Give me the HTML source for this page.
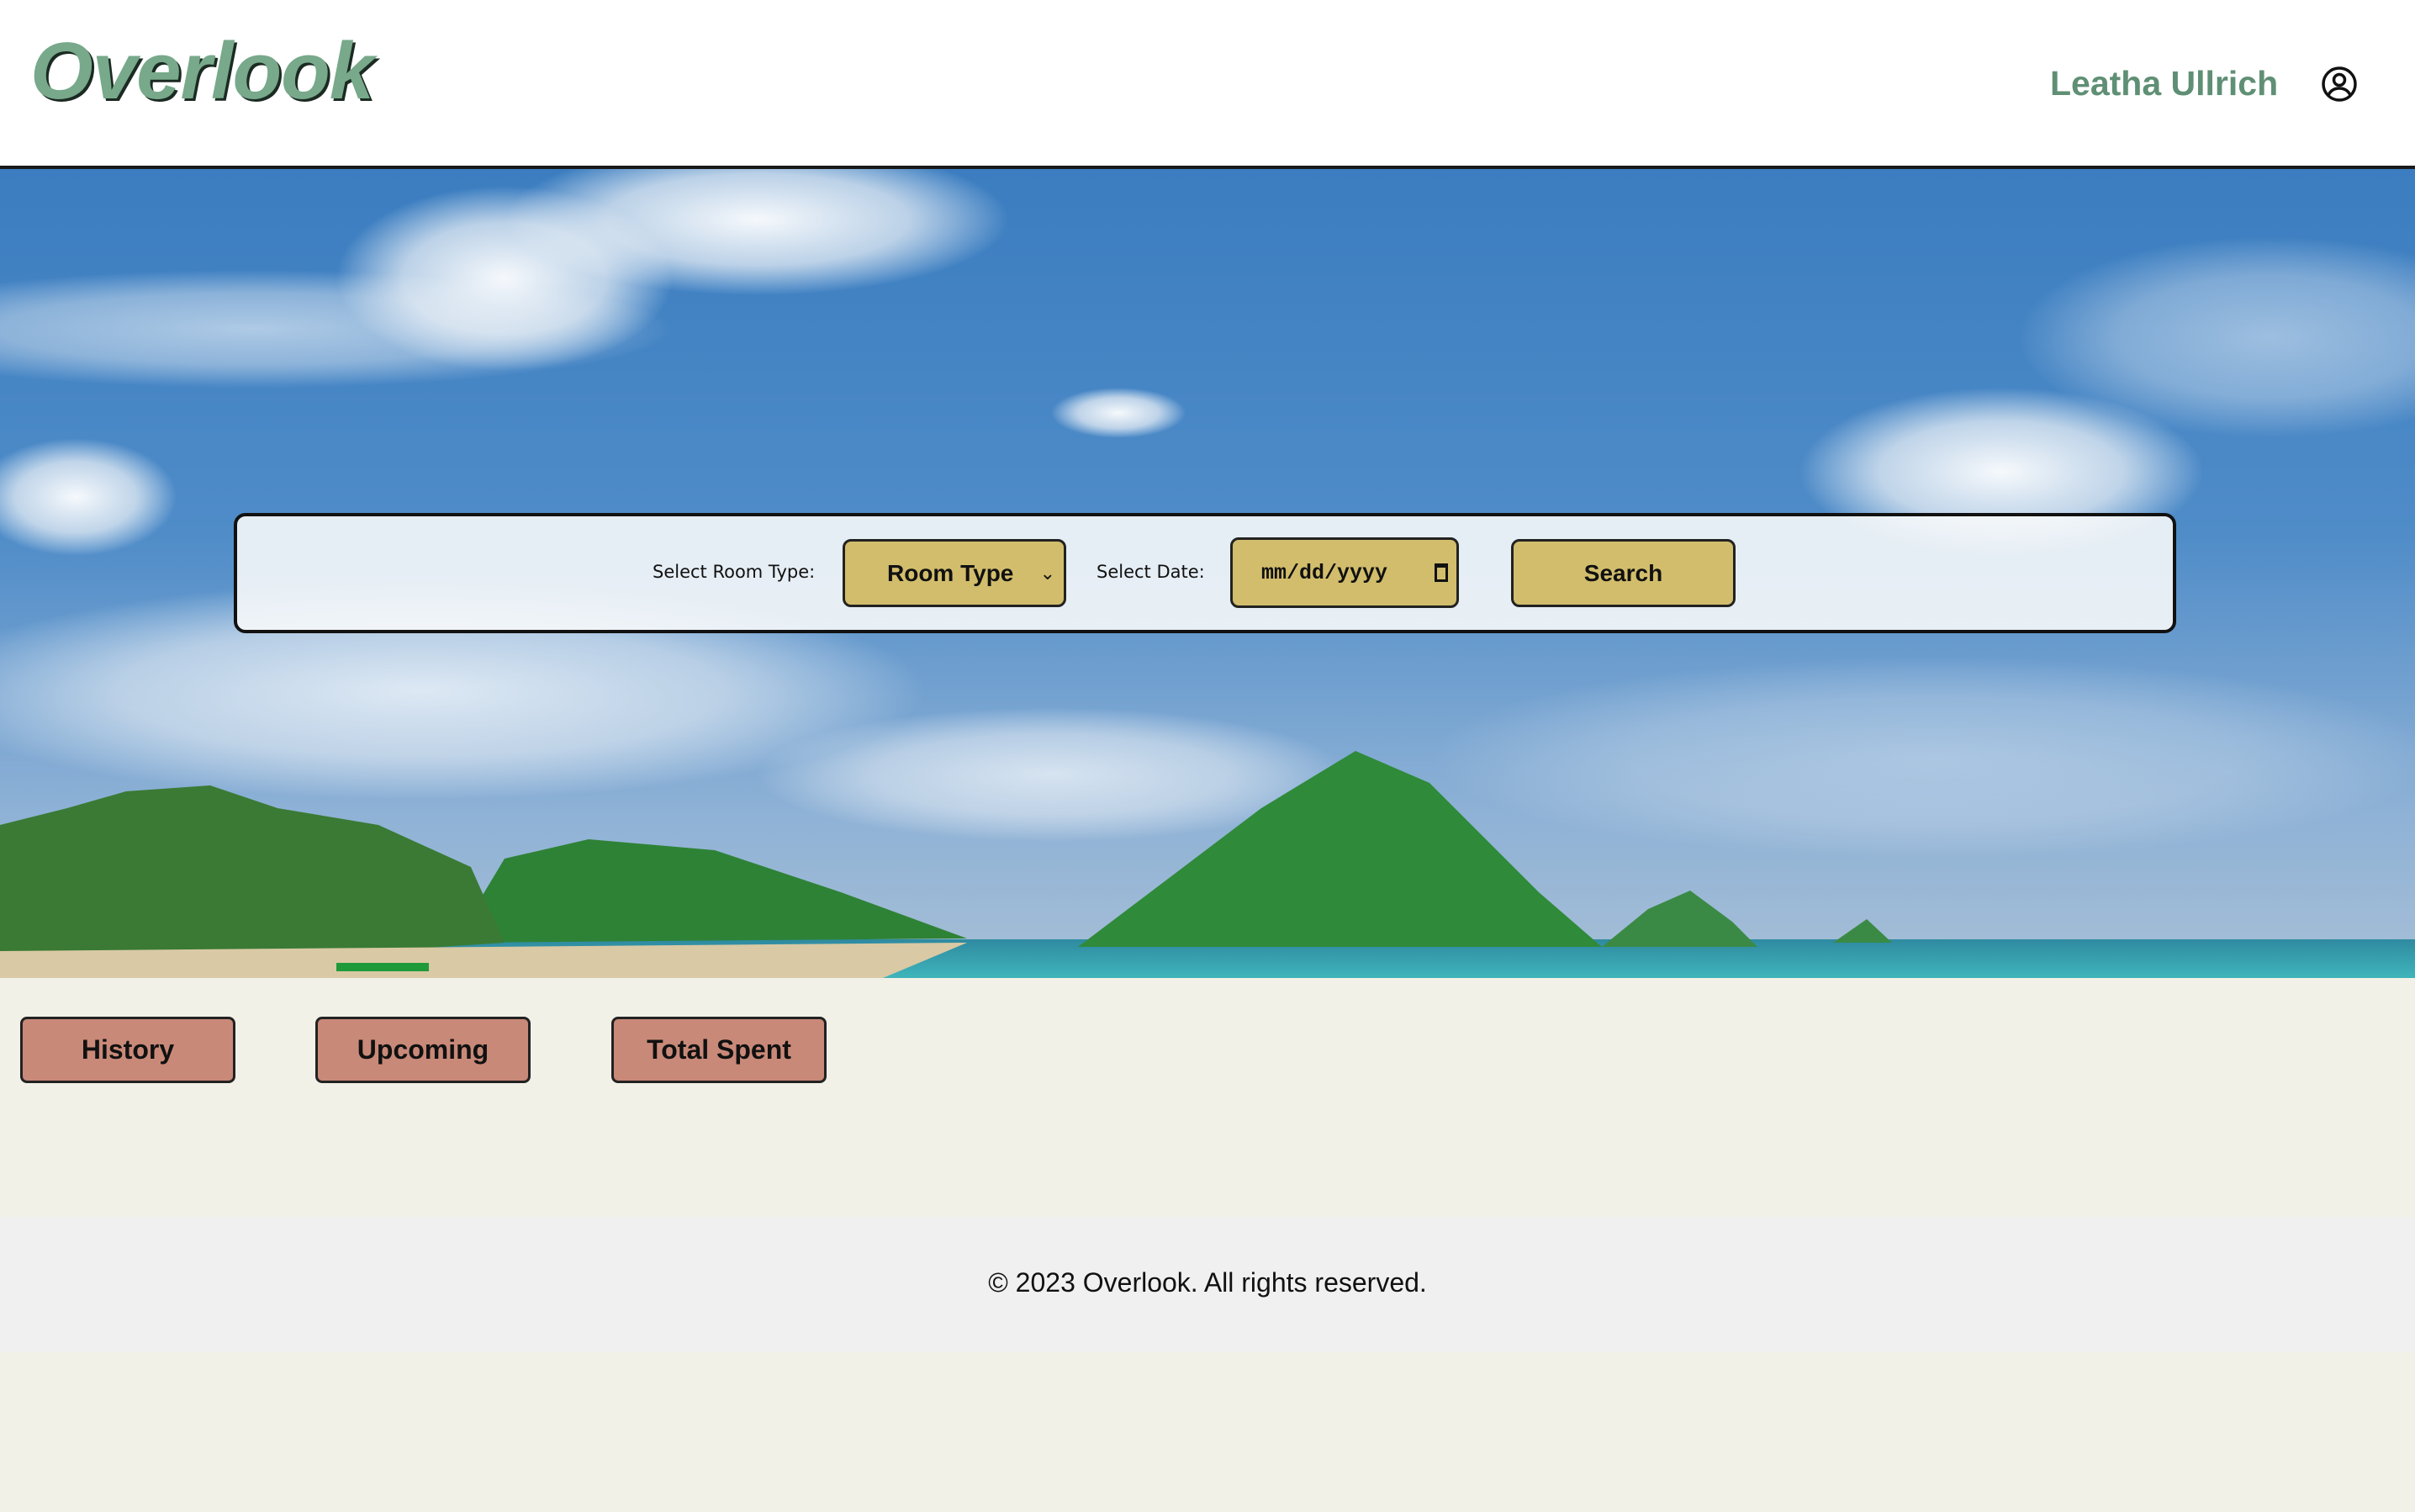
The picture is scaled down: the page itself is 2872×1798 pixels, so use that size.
<!DOCTYPE html>
<html><head><meta charset="utf-8"><style>
*{margin:0;padding:0;box-sizing:border-box}
body{width:2872px;height:1798px;background:#f2f1e8;font-family:"Liberation Sans",sans-serif;position:relative;overflow:hidden}
header{position:absolute;left:0;top:0;width:2872px;height:201px;background:#fff;border-bottom:4px solid #1a1a1a}
.logo{position:absolute;left:36px;top:30px;font-family:"Liberation Sans",sans-serif;font-weight:bold;font-style:italic;font-size:96px;color:#77a98a;letter-spacing:-1px;text-shadow:3px 3px 0 #1b2a22}
.name{position:absolute;left:2438px;top:76px;font-family:"Liberation Sans",sans-serif;font-weight:bold;font-size:41px;color:#5f8f74}
.hero{position:absolute;left:0;top:201px;width:2872px;height:962px;border-bottom:4px solid #1a1a1a}
.panel{position:absolute;left:278px;top:610px;width:2310px;height:143px;border:4px solid #111;border-radius:14px;background:rgba(246,248,250,0.9)}
.lbl{position:absolute;font-family:"DejaVu Sans",sans-serif;font-size:21px;color:#111;top:668px}
.gold{position:absolute;background:#d2bd6c;border:3px solid #222;border-radius:10px;font-weight:bold;font-size:28px;display:flex;align-items:center;justify-content:center;color:#111}
.btn{position:absolute;top:1209px;width:256px;height:79px;background:#c98978;border:3px solid #222;border-radius:8px;font-weight:bold;font-size:32px;display:flex;align-items:center;justify-content:center;color:#111}
footer{position:absolute;left:0;top:1447px;width:2872px;height:161px;background:#f0f0f0;text-align:center;font-family:"Liberation Sans",sans-serif;font-size:32px;line-height:156px;color:#111}
</style></head><body>
<header>
<div class="logo">Overlook</div>
<div class="name">Leatha Ullrich</div>
<svg style="position:absolute;left:2760px;top:78px" width="44" height="44" viewBox="0 0 44 44" fill="none" stroke="#111" stroke-width="3.5"><circle cx="22" cy="22" r="19"/><circle cx="22" cy="17" r="6.5"/><path d="M9 35c3-6 8-8 13-8s10 2 13 8"/></svg>
</header>
<div class="hero">
<svg width="2872" height="962" viewBox="0 0 2872 962">
<defs>
<linearGradient id="sky" x1="0" y1="0" x2="0" y2="1"><stop offset="0" stop-color="#3b7dc0"/><stop offset="0.45" stop-color="#4f8cc8"/><stop offset="0.8" stop-color="#8fb2d6"/><stop offset="1" stop-color="#a7bfd6"/></linearGradient>
<linearGradient id="sea" x1="0" y1="0" x2="0" y2="1"><stop offset="0" stop-color="#2f8aa0"/><stop offset="1" stop-color="#3fb5bb"/></linearGradient>
<radialGradient id="c"><stop offset="0" stop-color="#fff" stop-opacity="0.95"/><stop offset="0.6" stop-color="#f2f5f8" stop-opacity="0.7"/><stop offset="1" stop-color="#fff" stop-opacity="0"/></radialGradient>
</defs>
<rect width="2872" height="962" fill="url(#sky)"/>
<ellipse cx="600" cy="130" rx="200" ry="110" fill="url(#c)"/>
<ellipse cx="900" cy="60" rx="300" ry="90" fill="url(#c)"/>
<ellipse cx="300" cy="190" rx="500" ry="70" fill="url(#c)" opacity="0.6"/>
<ellipse cx="90" cy="390" rx="120" ry="70" fill="url(#c)"/>
<ellipse cx="2380" cy="360" rx="240" ry="100" fill="url(#c)"/>
<ellipse cx="2700" cy="200" rx="300" ry="120" fill="url(#c)" opacity="0.5"/>
<ellipse cx="1330" cy="290" rx="80" ry="30" fill="url(#c)"/>
<ellipse cx="500" cy="620" rx="600" ry="130" fill="url(#c)" opacity="0.8"/>
<ellipse cx="1250" cy="720" rx="350" ry="80" fill="url(#c)" opacity="0.7"/>
<ellipse cx="2300" cy="700" rx="600" ry="120" fill="url(#c)" opacity="0.35"/>
<rect x="0" y="916" width="2872" height="46" fill="url(#sea)"/>
<path d="M1282 925 L1500 760 L1612 692 L1700 730 L1830 860 L1905 925Z" fill="#2f8a3a"/>
<path d="M1905 925 L1960 880 L2010 858 L2060 895 L2090 925Z" fill="#3a8a45"/>
<path d="M2180 920 L2220 892 L2250 920Z" fill="#3a8a45"/>
<path d="M540 920 L600 820 L700 797 L850 810 L1000 860 L1150 915Z" fill="#2e8236"/>
<path d="M0 960 L0 780 L80 760 L150 740 L250 733 L330 760 L450 780 L560 830 L600 920Z" fill="#3a7a35"/>
<path d="M0 930 L1150 920 L1050 962 L0 962Z" fill="#d9c9a4"/>
<rect x="400" y="944" width="110" height="10" fill="#1f9a3a"/>
</svg>
</div>
<div class="panel"></div>
<div class="lbl" style="left:776px">Select Room Type:</div>
<div class="gold" style="left:1002px;top:641px;width:266px;height:81px;justify-content:flex-start;padding-left:50px">Room Type<span style="position:absolute;right:10px;font-weight:normal;font-size:22px">⌄</span></div>
<div class="lbl" style="left:1304px">Select Date:</div>
<div class="gold" style="left:1463px;top:639px;width:272px;height:84px;font-family:'Liberation Mono',monospace;font-size:25px;justify-content:flex-start;padding-left:34px">mm/dd/yyyy<span style="position:absolute;right:10px;width:16px;height:22px;border:3px solid #111;border-top-width:5px"></span></div>
<div class="gold" style="left:1797px;top:641px;width:267px;height:81px">Search</div>
<div class="btn" style="left:24px">History</div>
<div class="btn" style="left:375px">Upcoming</div>
<div class="btn" style="left:727px">Total Spent</div>
<footer>© 2023 Overlook. All rights reserved.</footer>
</body></html>
